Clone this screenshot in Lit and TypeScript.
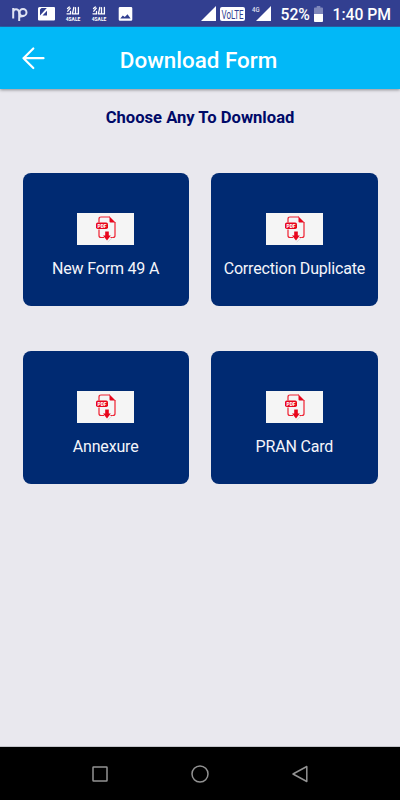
import { LitElement, html, css } from "lit";
import { customElement, property } from "lit/decorators.js";

@customElement("status-bar")
class StatusBar extends LitElement {
  static styles = css`
    :host { display: flex; align-items: center; justify-content: space-between; height: 27px; padding: 0 9px 0 12px; background: linear-gradient(#323f90 26px, #2a63ac 26px); color: #fff; box-sizing: border-box; }
    .group { display: flex; align-items: center; height: 27px; }
    svg { display: block; flex: none; overflow: visible; }
    .left { gap: 10px; }
    .volte { margin-left: 4.5px; }
    .second { margin-left: 7px; }
    .text { font-size: 15.7px; font-weight: 500; line-height: 27px; white-space: nowrap; padding-top: 1px; }
    .percent { margin-left: 9px; width: 29px; }
    .battery { margin: 0 9px 0 5px; }
    .label { font-family: Roboto, sans-serif; }
  `;

  private forSale() {
    return html`<svg width="16" height="16" viewBox="0 0 16 16" fill="none" stroke="#fff" stroke-width="1.3" stroke-linecap="round">
      <path d="M2 7.800h3.500V5.500M2.800 5.200L5.300 2.200M7.400 7.800h6V1.500M10.500 1.700V7.800M7.400 7.800L8.800 1.500M2.500 2.600l1.800-1.600"/>
      <text class="label" x="0.800" y="14.500" font-size="5.500" font-weight="700" fill="#fff" stroke="none" textLength="14.500" lengthAdjust="spacingAndGlyphs">4SALE</text>
    </svg>`;
  }

  render() {
    return html`
      <div class="group left">
        <svg width="16" height="16" viewBox="0 0 16 16" fill="none" stroke="#dfe2f2" stroke-width="2">
          <path d="M1.200 12.500V2M1.200 6Q1.500 3.200 4 3.200T7.200 6.200V15M7.200 10.300Q9 11 12 9.800"/><circle cx="11" cy="6.400" r="3.500"/>
        </svg>
        <svg width="17" height="16" viewBox="0 0 17 16"><path fill="#fff" fill-rule="evenodd" d="M1.500 1H16q1 0 1 1v11.500q0 1-1 1H1q-1 0-1-1V2.500Q0 1 1.500 1zM2 3.500V9.500L8.800 2H3.500zM4.500 9.500H9V4.700z"/></svg>
        ${this.forSale()}
        ${this.forSale()}
        <svg width="16" height="16" viewBox="0 0 16 16"><path fill="#fff" fill-rule="evenodd" d="M3 1h11q1.300 0 1.300 1.300v11.200q0 1.300-1.300 1.300H3q-1.300 0-1.300-1.300V2.300Q1.700 1 3 1zM3.300 12.500h10.300L10.500 8.300 7.800 11.100 5.800 9.400z"/></svg>
      </div>
      <div class="group">
        <svg width="15" height="16" viewBox="0 0 15 16"><path fill="#fff" d="M0 15L15 0v15z"/></svg>
        <svg class="volte" width="25" height="16" viewBox="0 0 25 16"><rect y="1" width="25" height="14" rx="2" fill="#fff"/><text class="label" x="1.500" y="12.500" font-size="12" fill="#323f90" textLength="22" lengthAdjust="spacingAndGlyphs">VoLTE</text></svg>
        <svg class="second" width="19" height="16" viewBox="0 0 19 16"><path fill="#fff" d="M4 15L19 0v15z"/><text class="label" x="0" y="6" font-size="6.500" font-weight="500" fill="#e0e3f2" textLength="7.500" lengthAdjust="spacingAndGlyphs">4G</text></svg>
        <span class="text percent">52%</span>
        <svg class="battery" width="9" height="16" viewBox="0 0 10 16" preserveAspectRatio="none"><path fill="#7f87bb" d="M3 0h4v1.500h2q1 0 1 1V8H0V2.500q0-1 1-1h2z"/><path fill="#fff" d="M0 8h10v7q0 1-1 1H1q-1 0-1-1z"/></svg>
        <span class="text">1:40 PM</span>
      </div>`;
  }
}

@customElement("form-card")
class FormCard extends LitElement {
  @property() label = "";

  static styles = css`
    :host { display: flex; flex-direction: column; align-items: center; box-sizing: border-box; height: 133px; padding-top: 40px; border-radius: 8px; background: #002a72; }
    .icon { display: block; width: 57px; height: 32px; background: #f5f5f5; }
    .caption { margin-top: 14px; font-size: 16px; letter-spacing: -0.180px; line-height: 20px; color: #f4f5fa; white-space: nowrap; }
    .pdf { font-family: Roboto, sans-serif; }
  `;

  render() {
    return html`
      <svg class="icon" viewBox="0 0 57 32">
        <path d="M22 9.500V6q0-2 2-2h9M22 16.500V22.500q0 2 2 2h3M33.500 24.500H36q2 0 2-2V9" fill="none" stroke="#ee2030" stroke-width="1.200"/>
        <path d="M32.500 3.500L38.500 9.500h-5q-1 0-1-1z" fill="#e8061c"/>
        <rect x="19" y="9.500" width="12" height="6.500" rx="1.800" fill="#e8061c"/>
        <text class="pdf" x="20.500" y="14.600" font-size="5" font-weight="900" fill="#fff" textLength="9" lengthAdjust="spacingAndGlyphs">PDF</text>
        <path d="M30.700 29l4.500-4" stroke="#ddd" stroke-width="1"/>
        <path d="M28.200 18.500h3.600v4h2L30 27.500l-4-5h2.200z" fill="#e8061c"/>
      </svg>
      <span class="caption">${this.label}</span>`;
  }
}

@customElement("app-root")
class AppRoot extends LitElement {
  static styles = css`
    :host { display: flex; flex-direction: column; width: 400px; height: 800px; background: #e9e8ee; font-family: Roboto, sans-serif; overflow: hidden; }
    .header { display: grid; grid-template-columns: 60px 1fr 60px; align-items: center; height: 62px; background: #02b8f7; color: #fff; box-shadow: 0 1px 3px rgba(0, 0, 0, 0.4); }
    .back { display: block; margin-left: 21px; }
    .title { text-align: center; margin: 4px 3px 0 0; font-size: 22.4px; font-weight: 500; line-height: 28px; white-space: nowrap; }
    main { flex: 1; }
    h2 { margin: 18px 0 0; text-align: center; font-size: 16.6px; line-height: 22px; font-weight: 700; color: #000a68; }
    .cards { display: grid; grid-template-columns: 1fr 1fr; column-gap: 22.5px; row-gap: 45px; padding: 44px 22.5px 0; }
    .nav { display: flex; justify-content: center; align-items: center; gap: 82px; height: 53px; background: #000; border-top: 1px solid #c3c4ca; box-sizing: content-box; }
    .nav svg { display: block; }
  `;

  private forms = ["New Form 49 A", "Correction Duplicate", "Annexure", "PRAN Card"];

  render() {
    return html`
      <status-bar></status-bar>
      <div class="header">
        <svg class="back" width="26" height="26" viewBox="0 0 26 26" fill="none" stroke="#fff" stroke-width="2.200" stroke-linecap="round" stroke-linejoin="round"><path d="M22.500 13.200H2.500M12.300 3.500L2.500 13.200l9.800 9.800"/></svg>
        <div class="title">Download Form</div>
      </div>
      <main>
        <h2>Choose Any To Download</h2>
        <div class="cards">${this.forms.map((f) => html`<form-card .label=${f}></form-card>`)}</div>
      </main>
      <div class="nav">
        <svg width="18" height="18" viewBox="0 0 18 18" fill="none" stroke="#929292" stroke-width="1.500"><rect x="2" y="2" width="14" height="14" rx="0.500"/></svg>
        <svg width="18" height="18" viewBox="0 0 18 18" fill="none" stroke="#929292" stroke-width="1.500"><circle cx="9" cy="9" r="8"/></svg>
        <svg width="18" height="18" viewBox="0 0 18 18" fill="none" stroke="#929292" stroke-width="1.500" stroke-linejoin="round"><path d="M15.800 1.500v15L2 9z"/></svg>
      </div>`;
  }
}
